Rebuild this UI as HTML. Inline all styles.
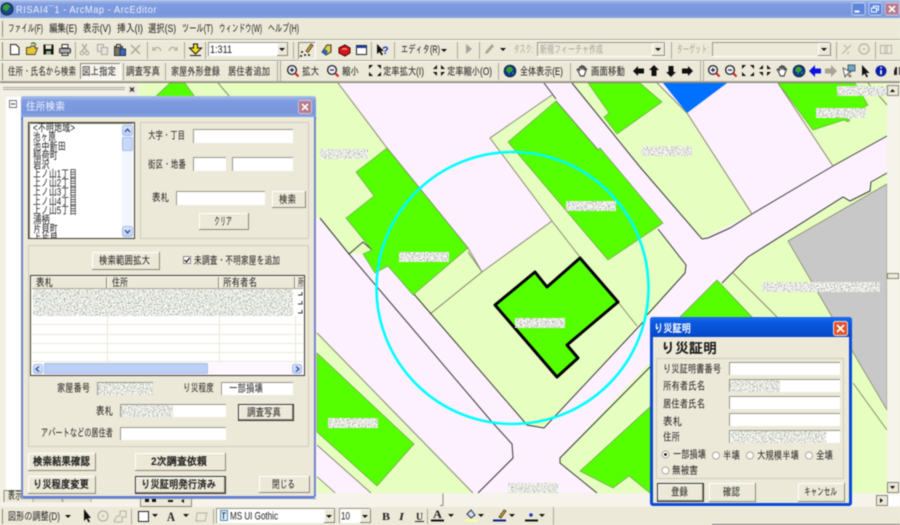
<!DOCTYPE html>
<html lang="ja"><head><meta charset="utf-8"><title>RISAI - ArcMap - ArcEditor</title>
<style>
html,body{margin:0;padding:0;background:#ece9d8;width:900px;height:525px;overflow:hidden}
svg{display:block;filter:blur(.45px)}
text{font-family:"Liberation Sans","IPAGothic","Noto Sans CJK JP",sans-serif;font-size:11px;fill:#1c1c1c}
.g{fill:#a6a498}
.b{font-weight:bold;fill:#222}
.hi{fill:none;stroke:#fff;stroke-width:1}
.lo{fill:none;stroke:#8a8878;stroke-width:1}
.dk{fill:none;stroke:#333;stroke-width:1}
.sep{stroke:#aca899;stroke-width:1}
.sepl{stroke:#fff;stroke-width:1}
.ln{fill:none;stroke:#8a8a70;stroke-width:1}
.rd{fill:none;stroke:#3a3a3a;stroke-width:1}
.lw{fill:#e6ffc0}
.gr{fill:#55ff00;stroke:#7a8a60;stroke-width:.6}
.inp{fill:#fff}
.ins{fill:none;stroke:#9a988c;stroke-width:1}
.tri{fill:#111}
</style></head><body>
<svg width="900" height="525" viewBox="0 0 900 525" xmlns="http://www.w3.org/2000/svg">
<defs>
<linearGradient id="tb" x1="0" y1="0" x2="0" y2="1"><stop offset="0" stop-color="#a9bfec"/><stop offset=".25" stop-color="#7f9be0"/><stop offset=".8" stop-color="#7896dc"/><stop offset="1" stop-color="#8aa4e2"/></linearGradient>
<linearGradient id="ab" x1="0" y1="0" x2="0" y2="1"><stop offset="0" stop-color="#1a6cf0"/><stop offset=".3" stop-color="#0a58e0"/><stop offset="1" stop-color="#0648c8"/></linearGradient>
<linearGradient id="sb" x1="0" y1="0" x2="0" y2="1"><stop offset="0" stop-color="#dbe6fb"/><stop offset="1" stop-color="#b9cdf6"/></linearGradient>
<filter id="noise" x="0" y="0" width="1" height="1" color-interpolation-filters="sRGB"><feTurbulence type="fractalNoise" baseFrequency=".7" numOctaves="2" seed="4"/><feGaussianBlur stdDeviation=".35"/><feColorMatrix values="1 0 0 0 .4 1 0 0 0 .41 1 0 0 0 .38 0 0 0 0 1"/><feComposite in2="SourceAlpha" operator="in"/></filter>
<g id="fxi"><path class="tri" d="M0 0h4l-4 4zM12 0v4l-4-4zM0 11v-4l4 4zM12 11h-4l4-4z" transform="translate(0,0)"/></g>
<g id="fxo"><path class="tri" d="M4 0v4h-4zM8 0l4 4h-4zM0 7h4v4zM8 7h4l-4 4z"/></g>
<g id="zi"><circle cx="5" cy="5" r="4.4" fill="#eef" stroke="#222" stroke-width="1.3"/><path d="M3 5h4M5 3v4" stroke="#222" stroke-width="1.2"/><path d="M8 8l3.5 3.5" stroke="#d02020" stroke-width="2"/></g>
<g id="zo"><circle cx="5" cy="5" r="4.4" fill="#eef" stroke="#222" stroke-width="1.3"/><path d="M3 5h4" stroke="#222" stroke-width="1.2"/><path d="M8 8l3.5 3.5" stroke="#d02020" stroke-width="2"/></g>
<g id="glb"><circle cx="6" cy="6" r="5.8" fill="#0a3a9a" stroke="#123"/><path d="M3 2.500l3-1 3 2-1 3-2 .5-1 3-1-3-2-1zM8 7l2 .5-1 2.500z" fill="#3aa030"/></g>
<g id="hnd"><path d="M2.500 7L1 4.500l1-.8 1.500 1.800V2l1.200-.3.500 3 .2-4 1.300 0 .2 4 .8-3.200 1.200.3-.6 3.700 1.300-2 1 .5-1.500 4-1 3H4.500z" fill="#fff" stroke="#222" stroke-width=".9"/></g>
<path id="dn" class="tri" d="M0 0h6l-3 3z"/>
</defs>

<!-- app background -->
<rect width="900" height="525" fill="#ece9d8"/>

<!-- map -->
<rect x="139" y="83" width="748" height="410" fill="#fdf0ff"/>
<path class="lw" d="M139 83H338L387 148 468 248 482 272 430 314 413 295 388 266 375 273 363 254 349 254 320 218H139z"/>
<path class="ln" d="M338 83L387 148 468 248 482 272M218 83L230 97"/>
<path class="rd" d="M320 218L349 254 363 242 372 250"/>
<path class="gr" d="M155 97L170 83H185L195 97z"/>
<path class="lw" d="M490 138L552 95 658 229 686 265 685 273 645 320 544 428 527 425 430 314 482 272 552 221z"/>
<path class="ln" d="M482 272L552 221 490 138 552 95M430 314L482 272M552 221L600 283"/>
<path class="lw" d="M413 295L468 252 482 272 430 314z"/>
<path class="ln" d="M430 314L482 272M468 252L482 272"/>
<path class="rd" d="M413 293L527 425 544 428 645 320M658 229L686 265 685 273 647 315"/>
<path class="rd" d="M349 254L492 422 512 444 513 458 478 493"/>
<path class="rd" d="M544 83L556 99M556 101L598 150"/>
<path class="ln" d="M618 302L637 326"/>
<path class="lw" d="M572 83H657L687 113 752 214 702 239 640 167z"/>
<path class="lw" d="M752 214L833 166 778 83H887V136L833 166z"/>
<path class="rd" d="M572 83L640 167 702 239 708 238 730 228 752 214 833 166 887 136"/>
<path d="M663 83H727L687 113z" fill="#0070ff"/>
<path class="ln" d="M657 83L687 113 752 214M778 83L833 166M868 83L887 105"/>
<path class="gr" d="M588 83L609 113 604 117 617 134 662 102 640 83z"/>
<path class="gr" d="M778 83H855L868 105 845 118 850 120 848 122 844 120 813 130z"/>
<path class="gr" d="M387 148L468 248 413 295 388 266 375 273 363 254 372 250 346 218 374 196 356 172z"/>
<path class="gr" d="M508 142L556 101 598 150 600 148 663 223 608 260z"/>
<path class="lw" d="M317 333L473 493H371L317 445z"/>
<path class="ln" d="M317 333L473 493M317 445L371 493"/>
<path class="gr" d="M317 353L414 444 377 486 317 432z"/>
<path class="rd" d="M317 477L335 493"/>
<path class="lw" d="M317 477L335 493H317z"/>
<path class="lw" d="M560 458L650 362 680 317 722 283 748 257 843 197 850 201 870 191 871 182 887 173V493H597L560 463z"/>
<path class="rd" d="M597 493L560 463 560 458 650 367 680 335M722 283L748 257 843 197 850 201 870 191 871 182 887 173"/>
<path d="M788 241L887 184V410L828 310z" fill="#c8c8c8" stroke="#8a8a70" stroke-width=".8"/>
<path class="ln" d="M733 273L780 320M853 383L887 430"/>
<path class="gr" d="M717 280L679 318 753 318z"/>
<path class="gr" d="M650 407L580 471 613 488 629 476 650 493H660V400z"/>
<path d="M495 305L535 272 547 287 580 258 618 302 567 345 578 358 557 377z" fill="#55ff00" stroke="#000" stroke-width="3" stroke-linejoin="round"/>
<circle cx="512.500" cy="288" r="136" fill="none" stroke="#00ffff" stroke-width="2.600"/>
<g fill="#000" filter="url(#noise)"><rect x="320" y="149" width="48" height="10"/><rect x="566" y="201" width="50" height="10"/><rect x="399" y="252" width="50" height="10"/><rect x="642" y="146" width="50" height="10"/><rect x="837" y="86" width="50" height="10"/><rect x="816" y="108" width="50" height="10"/><rect x="762" y="282" width="118" height="10"/><rect x="515" y="318" width="50" height="10"/><rect x="328" y="418" width="50" height="10"/><rect x="508" y="483" width="50" height="10"/></g>

<!-- right scrollbar -->
<rect x="887" y="83" width="13" height="422" fill="#f5f3ea"/>
<rect x="887.500" y="85.500" width="11" height="10" fill="#ece9d8" stroke="#8a8878"/><path class="tri" d="M890 92h5l-2.500-3z"/>
<rect x="887.500" y="273.500" width="11" height="5" fill="#ece9d8" stroke="#8a8878"/>
<rect x="887.500" y="482.500" width="11" height="10" fill="#ece9d8" stroke="#8a8878"/><path class="tri" d="M890 486h5l-2.500 3z"/>
<!-- bottom scrollbar -->
<rect x="0" y="493" width="900" height="14" fill="#f5f3ea"/>
<path class="lo" d="M443 493.500V505.500H440"/>
<rect x="876.500" y="495.500" width="11" height="10" fill="#ece9d8" stroke="#8a8878"/><path class="tri" d="M880 498v5l3-2.500z"/>
<rect x="888" y="495" width="12" height="11" fill="#fff"/>
<rect x="140.500" y="497.500" width="51" height="9" fill="#ece9d8" stroke="#8a8878"/><path class="tri" d="M145 499h4v3h-4zM152 499h4v3h-4zM168 500h5v2h-5zM184 499l-3 2 3 2z"/>

<!-- left TOC panel -->
<rect x="0" y="83" width="139" height="420" fill="#f3f1e6"/>
<rect x="6" y="97" width="132" height="393" fill="#fff"/>
<path d="M3 87.500H125M3 89.500H125" stroke="#aca899"/>
<rect x="128" y="85" width="9" height="9" fill="#ece9d8"/><path d="M130 87.500l4 4M134 87.500l-4 4" stroke="#111" stroke-width="1.200"/>
<rect x="9.500" y="100.500" width="7" height="7" fill="#fff" stroke="#777"/><path d="M11 104h4" stroke="#333"/>
<path d="M4 502V490.500H33V502" fill="#ece9d8" stroke="#8a8878"/>
<text x="8" y="499" textLength="14" lengthAdjust="spacingAndGlyphs">表示</text>
<path d="M33 502V493H62V502M63 502V493H91V502" fill="#e4e1d0" stroke="#aca899"/>

<!-- title bar -->
<rect width="900" height="18" fill="url(#tb)"/>
<circle cx="7" cy="9" r="6" fill="#174a8c" stroke="#123"/><path d="M3 6l4-2 3 2-2 4-2 1-3-2z" fill="#3aa030"/>
<text x="16" y="13" textLength="141" lengthAdjust="spacingAndGlyphs" style="fill:#eef2fd;font-size:10.500px;letter-spacing:.6px">RISAI4¯1 - ArcMap - ArcEditor</text>
<rect x="852" y="3" width="13" height="12" rx="2" fill="#5d85dc" stroke="#dce6fa" stroke-width=".7"/><rect x="854.500" y="10.500" width="5" height="2" fill="#fff"/>
<rect x="869" y="3" width="13" height="12" rx="2" fill="#5d85dc" stroke="#dce6fa" stroke-width=".7"/><rect x="873.500" y="6" width="5" height="4" fill="none" stroke="#fff"/><rect x="871.500" y="8" width="5" height="4" fill="#5d85dc" stroke="#fff"/>
<rect x="885" y="3" width="14" height="12" rx="2" fill="#b67a8c" stroke="#e6dce6" stroke-width=".7"/><path d="M889 6l6 6M895 6l-6 6" stroke="#fff" stroke-width="1.600"/>

<!-- menu -->
<rect y="18" width="900" height="21" fill="#ece9d8"/>
<path d="M0 39.500H900" class="sep"/><path d="M0 40.500H900" class="sepl"/>
<path d="M2.500 21V37" class="lo"/>
<text x="8" y="32" textLength="35" lengthAdjust="spacingAndGlyphs">ファイル(F)</text>
<text x="49" y="32" textLength="28" lengthAdjust="spacingAndGlyphs">編集(E)</text>
<text x="83" y="32" textLength="28" lengthAdjust="spacingAndGlyphs">表示(V)</text>
<text x="117" y="32" textLength="26" lengthAdjust="spacingAndGlyphs">挿入(I)</text>
<text x="148" y="32" textLength="28" lengthAdjust="spacingAndGlyphs">選択(S)</text>
<text x="182" y="32" textLength="31" lengthAdjust="spacingAndGlyphs">ツール(T)</text>
<text x="219" y="32" textLength="43" lengthAdjust="spacingAndGlyphs">ウィンドウ(W)</text>
<text x="268" y="32" textLength="31" lengthAdjust="spacingAndGlyphs">ヘルプ(H)</text>

<!-- toolbar 2 -->
<rect y="41" width="900" height="19" fill="#ece9d8"/>
<path d="M0 60.500H900" class="sep"/><path d="M0 61.500H900" class="sepl"/>
<path d="M2.500 42V59" class="lo"/>
<path d="M10.500 44.500H16L19 47.500V54.500H10.500z" fill="#fff" stroke="#222"/>
<path d="M26.500 54.500V47.500H30L31 46H35V48H37.500L35 54.500z" fill="#e8c830" stroke="#443"/><path d="M31 44c2-2 4-1 5 1" fill="none" stroke="#286a20" stroke-width="1.200"/>
<rect x="43.500" y="44.500" width="10" height="10" fill="#111"/><rect x="45.500" y="45" width="6" height="4" fill="#e8e8d0"/><rect x="46" y="51" width="5" height="3.500" fill="#8a8"/>
<path d="M62 44.500H68V48H62z" fill="#fff" stroke="#333"/><rect x="59.500" y="48.500" width="11" height="4.500" rx="1" fill="#aaa" stroke="#333"/><path d="M62 53H68V55.500H62z" fill="#ddd" stroke="#333"/>
<path d="M75.500 42V59M147.500 42V59M184.500 42V59M205.500 42V59M293.500 42V59M371.500 42V59M394.500 42V59M457.500 42V59M479.500 42V59M671.500 42V59M836.500 42V59M875.500 42V59" class="sep"/>
<path d="M82 44l5 7M87 44l-5 7" stroke="#a6a498" stroke-width="1.200"/><circle cx="82" cy="53" r="1.800" fill="none" stroke="#a6a498"/><circle cx="87" cy="53" r="1.800" fill="none" stroke="#a6a498"/>
<rect x="97.500" y="44.500" width="6" height="7" fill="#e6e4d8" stroke="#aaa"/><rect x="101.500" y="47.500" width="6" height="7" fill="#e6e4d8" stroke="#aaa"/>
<rect x="114.500" y="46.500" width="8" height="9" fill="#776" stroke="#333"/><rect x="116.500" y="44.500" width="4" height="3" fill="#ccc" stroke="#333"/><rect x="120" y="49" width="5.500" height="6.500" fill="#3a6ac8" stroke="#234"/>
<path d="M131 45l9 9M140 45l-9 9" stroke="#a6a498" stroke-width="1.400"/>
<path d="M153 50c3-4 7-3 8 1M153 47v3h3" fill="none" stroke="#b0ae9f" stroke-width="1.200"/>
<path d="M177 50c-3-4-7-3-8 1M177 47v3h-3" fill="none" stroke="#b0ae9f" stroke-width="1.200"/>
<path d="M193.500 44h4v4h4l-6 6-6-6h4z" fill="#f4e020" stroke="#111"/><path d="M190 55.500h11" stroke="#111"/>
<rect x="208" y="42" width="80" height="14" fill="#fff"/><path class="ins" d="M208.500 56V42.500H288"/>
<text x="210" y="53" textLength="22" lengthAdjust="spacingAndGlyphs">1:311</text>
<rect x="277" y="43" width="10" height="12" fill="#ece9d8"/><path class="lo" d="M287.500 43V55.500H277"/><path class="hi" d="M277.500 55V43.500H287"/><use href="#dn" x="279" y="48"/>
<path class="lo" d="M298.500 59V42.500H315"/><path class="hi" d="M315.500 42V59.500H298"/>
<path d="M311 44l2 1.500-5 7-2-1.500z" fill="#e8a020" stroke="#222" stroke-width=".7"/><path d="M301 52h2M304 55h2M300 56h2M308 55h2" stroke="#111" stroke-width="1.400"/>
<path d="M322 52l5-7h4v7l-5 3z" fill="#e0d040" stroke="#333"/><circle cx="325" cy="52" r="2.500" fill="#2a62b0"/>
<path d="M339 48l6-3 5 3v5l-5 3-6-3z" fill="#d81818" stroke="#400"/><path d="M342 49h5" stroke="#fbb"/>
<rect x="356.500" y="45.500" width="10" height="9" fill="#fff" stroke="#222"/><rect x="356.500" y="45.500" width="10" height="2.500" fill="#1a3aa0"/>
<path d="M377 44v10l2.500-2 2 3.500 1.500-1-2-3.500h3z" fill="#111"/><text x="382" y="54" class="b" style="font-size:11px;fill:#1a38c0">?</text>
<text x="401" y="53" textLength="39" lengthAdjust="spacingAndGlyphs">エディタ(R)</text><use href="#dn" x="441" y="49"/>
<path d="M466 44l6 5-6 5z" fill="#a6a498"/>
<path d="M485 54l1-3 6-7 2 2-6 7z" fill="#a6a498"/><use href="#dn" x="500" y="48"/>
<text x="514" y="53" textLength="19" class="g" lengthAdjust="spacingAndGlyphs">タスク:</text>
<rect x="537" y="42" width="128" height="14" fill="#ece9d8"/><path class="ins" d="M537.500 56V42.500H665"/><path d="M665.500 42V56.500H537" stroke="#fff" fill="none"/>
<text x="540" y="53" textLength="63" class="g" lengthAdjust="spacingAndGlyphs">新規フィーチャ作成</text>
<rect x="652" y="43" width="12" height="12" fill="#ece9d8"/><path class="lo" d="M664.500 43V55.500H652"/><path class="hi" d="M652.500 55V43.500H664"/><use href="#dn" x="655" y="48"/>
<text x="677" y="53" textLength="32" class="g" lengthAdjust="spacingAndGlyphs">ターゲット:</text>
<rect x="712" y="42" width="118" height="14" fill="#ece9d8"/><path class="ins" d="M712.500 56V42.500H830"/><path d="M830.500 42V56.500H712" stroke="#fff" fill="none"/>
<rect x="818" y="43" width="12" height="12" fill="#ece9d8"/><path class="lo" d="M830.500 43V55.500H818"/><path class="hi" d="M818.500 55V43.500H830"/><use href="#dn" x="821" y="48"/>
<path d="M842 54l9-9M844 45l3 3M847 54l2-2" stroke="#b5b3a4" stroke-width="1.100" fill="none"/>
<circle cx="864" cy="49" r="5" fill="none" stroke="#b5b3a4" stroke-width="1.200"/><circle cx="864" cy="49" r="1" fill="#b5b3a4"/>
<rect x="880.500" y="45.500" width="11" height="8" fill="none" stroke="#b5b3a4"/><path d="M885 46v7M887 46v7" stroke="#b5b3a4"/>

<!-- toolbar 3 -->
<rect y="62" width="900" height="19" fill="#ece9d8"/>
<path d="M0 81.500H900" stroke="#aca899"/><path d="M0 82.500H900" stroke="#8a8878"/>
<path d="M2.500 63V80" class="lo"/>
<text x="8" y="75" textLength="68" lengthAdjust="spacingAndGlyphs">住所・氏名から検索</text>
<rect x="80" y="63" width="40" height="16" fill="#f6f4ec"/><path class="lo" d="M80.500 79V63.500H120"/><path class="hi" d="M120.500 63V79.500H80"/>
<text x="82" y="75" textLength="34" lengthAdjust="spacingAndGlyphs">図上指定</text>
<path d="M123.500 63V80M165.500 63V80M277.500 61V81M280.500 61V81M498.500 63V80M570.500 63V80M700.500 61V81M703.500 61V81" class="sep"/>
<text x="126" y="75" textLength="34" lengthAdjust="spacingAndGlyphs">調査写真</text>
<text x="171" y="75" textLength="49" lengthAdjust="spacingAndGlyphs">家屋外形登録</text>
<text x="228" y="75" textLength="42" lengthAdjust="spacingAndGlyphs">居住者追加</text>
<use href="#zi" x="287" y="65"/><text x="302" y="75" textLength="17" lengthAdjust="spacingAndGlyphs">拡大</text>
<use href="#zo" x="327" y="65"/><text x="342" y="75" textLength="17" lengthAdjust="spacingAndGlyphs">縮小</text>
<use href="#fxi" x="369" y="65"/><text x="383" y="75" textLength="41" lengthAdjust="spacingAndGlyphs">定率拡大(I)</text>
<use href="#fxo" x="433" y="65"/><text x="447" y="75" textLength="45" lengthAdjust="spacingAndGlyphs">定率縮小(O)</text>
<use href="#glb" x="504" y="65"/><text x="520" y="75" textLength="43" lengthAdjust="spacingAndGlyphs">全体表示(E)</text>
<use href="#hnd" x="576" y="65"/><text x="591" y="75" textLength="34" lengthAdjust="spacingAndGlyphs">画面移動</text>
<path class="tri" d="M633 71l5-5v2.500h6v5h-6V76zM654 65l5 5h-2.500v6h-5v-6H649zM671 77l-5-5h2.500v-6h5v6H676zM693 71l-5 5v-2.500h-6v-5h6V66z"/>
<use href="#zi" x="708" y="65"/><use href="#zo" x="725" y="65"/><use href="#fxi" x="742" y="65"/><use href="#fxo" x="759" y="65"/><use href="#hnd" x="776" y="65"/><use href="#glb" x="793" y="65"/>
<path d="M809 71l6-6v3.500h6v5h-6V77z" fill="#0a14e0"/><path d="M837 71l-6 6v-3.500h-6v-5h6V65z" fill="#a6a498"/>
<path d="M843 68l2 9 2-3 3 3 1-1-3-3 3-1z" fill="#fff" stroke="#333" stroke-width=".7"/><rect x="848" y="65" width="7" height="6" fill="#6ac" stroke="#333" stroke-width=".7"/>
<path d="M862 65v11l2.500-2.500 2 4 1.500-1-2-3.500h3.500z" fill="#111"/>
<circle cx="881" cy="71" r="5.500" fill="#0a1ea8"/><path d="M881 67v1.500M881 70v4.500" stroke="#fff" stroke-width="1.700"/>
<path d="M894 75v-4l1.500-4h1.500v8zM899 75v-8h1v8z" fill="#222"/>

<!-- Main dialog -->
<rect x="21" y="96" width="295" height="402" rx="3" fill="#5a7de0"/>
<path d="M21.500 120V494.500M315.500 120V494.500M21 498.500H316" stroke="#8c92a8"/>
<path d="M21 117V99q0-3 3-3H313q3 0 3 3V117z" fill="url(#tb)"/>
<text x="26" y="110" textLength="39" lengthAdjust="spacingAndGlyphs" style="fill:#f0f4fc;font-size:11px">住所検索</text>
<rect x="298.500" y="100.500" width="13" height="13" rx="2" fill="#b67a8c" stroke="#e6dce6" stroke-width=".7"/><path d="M302 104l6 6M308 104l-6 6" stroke="#fff" stroke-width="1.600"/>
<rect x="23" y="117" width="291" height="379" fill="#ece9d8"/>

<!-- listbox -->
<rect x="28.500" y="122.500" width="106" height="116" fill="#fff" stroke="#3a3a30"/>
<path d="M30 123.500H133M29.500 124V238" stroke="#8a8878"/>
<g><text x="33" y="131.500" textLength="42" lengthAdjust="spacingAndGlyphs">&lt;不明地域&gt;</text>
<text x="33" y="140.500" textLength="23" lengthAdjust="spacingAndGlyphs">池ヶ原</text>
<text x="33" y="150" textLength="33" lengthAdjust="spacingAndGlyphs">池中新田</text>
<text x="33" y="159" textLength="25" lengthAdjust="spacingAndGlyphs">稲荷町</text>
<text x="33" y="168.500" textLength="17" lengthAdjust="spacingAndGlyphs">岩沢</text>
<text x="33" y="177.500" textLength="44" lengthAdjust="spacingAndGlyphs">上ノ山1丁目</text>
<text x="33" y="186.500" textLength="44" lengthAdjust="spacingAndGlyphs">上ノ山2丁目</text>
<text x="33" y="195.500" textLength="44" lengthAdjust="spacingAndGlyphs">上ノ山3丁目</text>
<text x="33" y="205" textLength="44" lengthAdjust="spacingAndGlyphs">上ノ山4丁目</text>
<text x="33" y="214" textLength="44" lengthAdjust="spacingAndGlyphs">上ノ山5丁目</text>
<text x="33" y="223" textLength="17" lengthAdjust="spacingAndGlyphs">浦柄</text>
<text x="33" y="232.500" textLength="25" lengthAdjust="spacingAndGlyphs">片貝町</text></g>
<text x="33" y="241.500" textLength="25" lengthAdjust="spacingAndGlyphs">上片貝</text>
<rect x="28" y="238.300" width="107" height="6" fill="#ece9d8"/><path d="M28 238.500H135" stroke="#3a3a30"/>
<rect x="122" y="124" width="11" height="114" fill="#f2f6fc"/>
<rect x="122.500" y="125.500" width="10" height="10" rx="2" fill="url(#sb)" stroke="#a8bce8"/><path d="M125 132l2.500-3 2.500 3" fill="none" stroke="#2a4a90" stroke-width="1.300"/>
<rect x="122.500" y="137.500" width="10" height="13" rx="1" fill="#c8d8f8" stroke="#a8bce8"/>
<rect x="122.500" y="226.500" width="10" height="10" rx="2" fill="url(#sb)" stroke="#a8bce8"/><path d="M125 230l2.500 3 2.500-3" fill="none" stroke="#2a4a90" stroke-width="1.300"/>

<!-- right group -->
<rect x="140.500" y="122.500" width="168" height="116" fill="none" stroke="#cfccba"/>
<text x="148" y="139" textLength="37" lengthAdjust="spacingAndGlyphs">大字・丁目</text>
<rect class="inp" x="193" y="129" width="100" height="14"/><path class="ins" d="M193.500 143V129.500H293"/>
<text x="148" y="168" textLength="38" lengthAdjust="spacingAndGlyphs">街区・地番</text>
<rect class="inp" x="193" y="157" width="33" height="14"/><path class="ins" d="M193.500 171V157.500H226"/>
<rect class="inp" x="232" y="157" width="61" height="14"/><path class="ins" d="M232.500 171V157.500H293"/>
<text x="152" y="201" textLength="17" lengthAdjust="spacingAndGlyphs">表札</text>
<rect class="inp" x="176" y="191" width="89" height="14"/><path class="ins" d="M176.500 205V191.500H265"/>
<path class="hi" d="M272.500 207V191.500H305"/><path class="lo" d="M305.500 191V207.500H272"/>
<text x="279" y="203" textLength="17" lengthAdjust="spacingAndGlyphs">検索</text>
<path class="hi" d="M199.500 229V213.500H248"/><path class="lo" d="M248.500 213V229.500H199"/>
<text x="214" y="225" textLength="18" lengthAdjust="spacingAndGlyphs">クリア</text>

<!-- group 2 -->
<rect x="28.500" y="245.500" width="280" height="201" fill="none" stroke="#cfccba"/>
<path class="hi" d="M92.500 269V252.500H159"/><path class="lo" d="M159.500 252V269.500H92"/>
<text x="99" y="264" textLength="51" lengthAdjust="spacingAndGlyphs">検索範囲拡大</text>
<rect x="183.500" y="256.500" width="7" height="7" fill="#fff" stroke="#888"/><path d="M184.500 260l2 2 3-4" fill="none" stroke="#111" stroke-width="1.200"/>
<text x="194" y="264" textLength="86" lengthAdjust="spacingAndGlyphs">未調査・不明家屋を追加</text>

<!-- list view -->
<rect x="30.500" y="275.500" width="274" height="100" fill="#fff" stroke="#3a3a30"/>
<rect x="32" y="277" width="271" height="11" fill="#ece9d8"/>
<path d="M32 288.500H303" stroke="#aca899"/>
<path d="M106.500 277V288M218.500 277V288M294.500 277V288" stroke="#8a8878"/><path d="M107.500 277V288M219.500 277V288M295.500 277V288" stroke="#fff"/>
<text x="36" y="286" textLength="17" lengthAdjust="spacingAndGlyphs">表札</text>
<text x="112" y="286" textLength="16" lengthAdjust="spacingAndGlyphs">住所</text>
<text x="223" y="286" textLength="34" lengthAdjust="spacingAndGlyphs">所有者名</text>
<text x="298" y="286" textLength="6" lengthAdjust="spacingAndGlyphs">所</text>
<path d="M32 324.500H303M32 334.500H303M32 343.500H303M32 352.500H303M32 361.500H303M107.500 316V363M219.500 316V363M295.500 316V363" stroke="#ece9d8"/>
<rect x="33" y="289" width="260" height="27" fill="#000" filter="url(#noise)"/>
<path d="M298 295h4v-3M298 304h4v-3M298 313h4v-3" fill="none" stroke="#333"/>
<rect x="32" y="363" width="271" height="12" fill="#fdf8ff"/>
<rect x="33.500" y="364.500" width="9" height="9" rx="2" fill="url(#sb)" stroke="#a8bce8"/><path d="M39 366.500l-3 2.500 3 2.500" fill="none" stroke="#2a4a90" stroke-width="1.200"/>
<rect x="44.500" y="363.500" width="163" height="10" rx="1" fill="#bcd0f6" stroke="#a8bce8"/>
<rect x="292.500" y="364.500" width="9" height="9" rx="2" fill="url(#sb)" stroke="#a8bce8"/><path d="M296 366.500l3 2.500-3 2.500" fill="none" stroke="#2a4a90" stroke-width="1.200"/>

<!-- detail fields -->
<text x="57" y="391.500" textLength="33" lengthAdjust="spacingAndGlyphs">家屋番号</text>
<rect x="97" y="382" width="56" height="13" fill="#000" filter="url(#noise)"/><path class="ins" d="M97.500 395V382.500H153"/>
<text x="183" y="391.500" textLength="31" lengthAdjust="spacingAndGlyphs">り災程度</text>
<rect class="inp" x="221" y="382" width="72" height="13"/><path class="ins" d="M221.500 395V382.500H293"/>
<text x="229" y="392" textLength="34" lengthAdjust="spacingAndGlyphs">一部損壊</text>
<text x="96" y="414.500" textLength="17" lengthAdjust="spacingAndGlyphs">表札</text>
<rect class="inp" x="120" y="404" width="106" height="13"/><rect x="121" y="405" width="52" height="12" fill="#000" filter="url(#noise)"/><path class="ins" d="M120.500 417V404.500H226"/>
<rect x="238.500" y="404.500" width="55" height="16" fill="#ece9d8" stroke="#333"/><path class="hi" d="M239.500 420V405.500H293"/><path class="lo" d="M292.500 405V419.500H239"/>
<text x="247" y="416" textLength="34" lengthAdjust="spacingAndGlyphs">調査写真</text>
<text x="41" y="436.500" textLength="72" lengthAdjust="spacingAndGlyphs">アパートなどの居住者</text>
<rect class="inp" x="120" y="427" width="106" height="13"/><path class="ins" d="M120.500 440V427.500H226"/>

<!-- bottom buttons -->
<path class="hi" d="M28.500 470V453.500H95"/><path class="lo" d="M95.500 453V470.500H28"/>
<text x="33" y="465" class="b" textLength="57" lengthAdjust="spacingAndGlyphs">検索結果確認</text>
<path class="hi" d="M135.500 470V453.500H225"/><path class="lo" d="M225.500 453V470.500H135"/>
<text x="151" y="465" class="b" textLength="56" lengthAdjust="spacingAndGlyphs">2次調査依頼</text>
<path class="hi" d="M28.500 493V476.500H95"/><path class="lo" d="M95.500 476V493.500H28"/>
<text x="33" y="488" class="b" textLength="56" lengthAdjust="spacingAndGlyphs">り災程度変更</text>
<rect x="135.500" y="476.500" width="90" height="17" fill="#ece9d8" stroke="#333"/><path class="hi" d="M136.500 492V477.500H225"/><path class="lo" d="M224.500 477V492.500H136"/>
<text x="141" y="488" class="b" textLength="75" lengthAdjust="spacingAndGlyphs">り災証明発行済み</text>
<path class="hi" d="M259.500 492V476.500H309"/><path class="lo" d="M309.500 476V492.500H259"/>
<text x="272" y="488" textLength="23" lengthAdjust="spacingAndGlyphs">閉じる</text>

<!-- Small dialog -->
<rect x="650" y="317" width="202" height="189" rx="3" fill="#0a4ad8"/>
<path d="M650 337V320q0-3 3-3H849q3 0 3 3V337z" fill="url(#ab)"/>
<text x="654" y="332" class="b" textLength="37" lengthAdjust="spacingAndGlyphs" style="fill:#fff">り災証明</text>
<rect x="833.500" y="321.500" width="14" height="14" rx="2" fill="#e0562c" stroke="#f4e0d8"/><path d="M837 325l7 7M844 325l-7 7" stroke="#fff" stroke-width="1.800"/>
<rect x="653" y="337" width="196" height="166" fill="#ece9d8"/>
<text x="661" y="353" class="b" textLength="56" lengthAdjust="spacingAndGlyphs" style="font-size:14px;fill:#111">り災証明</text>
<rect x="656.500" y="358.500" width="187" height="120" fill="none" stroke="#cfccba"/>
<text x="663" y="372.500" textLength="58" lengthAdjust="spacingAndGlyphs">り災証明書番号</text>
<rect class="inp" x="729" y="362" width="111" height="13"/><path class="ins" d="M729.500 375V362.500H840"/>
<text x="663" y="389.500" textLength="42" lengthAdjust="spacingAndGlyphs">所有者氏名</text>
<rect class="inp" x="729" y="379" width="111" height="13"/><rect x="730" y="380" width="50" height="12" fill="#000" filter="url(#noise)"/><path class="ins" d="M729.500 392V379.500H840"/>
<text x="663" y="407.500" textLength="42" lengthAdjust="spacingAndGlyphs">居住者氏名</text>
<rect class="inp" x="729" y="396" width="111" height="13"/><path class="ins" d="M729.500 409V396.500H840"/>
<text x="663" y="425" textLength="19" lengthAdjust="spacingAndGlyphs">表札</text>
<rect class="inp" x="729" y="413" width="111" height="13"/><path class="ins" d="M729.500 426V413.500H840"/>
<text x="663" y="440.500" textLength="17" lengthAdjust="spacingAndGlyphs">住所</text>
<rect class="inp" x="729" y="430" width="111" height="13"/><rect x="731" y="431" width="95" height="12" fill="#000" filter="url(#noise)"/><path class="ins" d="M729.500 443V430.500H840"/>
<circle cx="665.500" cy="454.500" r="3.500" fill="#fff" stroke="#aca899"/><circle cx="665.500" cy="454.500" r="1.400" fill="#111"/>
<text x="673" y="458" textLength="33" lengthAdjust="spacingAndGlyphs">一部損壊</text>
<circle cx="716" cy="455.500" r="3.500" fill="#fff" stroke="#aca899"/>
<text x="723" y="459" textLength="17" lengthAdjust="spacingAndGlyphs">半壊</text>
<circle cx="750" cy="455.500" r="3.500" fill="#fff" stroke="#aca899"/>
<text x="757" y="459" textLength="42" lengthAdjust="spacingAndGlyphs">大規模半壊</text>
<circle cx="809" cy="455.500" r="3.500" fill="#fff" stroke="#aca899"/>
<text x="816" y="459" textLength="17" lengthAdjust="spacingAndGlyphs">全壊</text>
<circle cx="665.500" cy="470.500" r="3.500" fill="#fff" stroke="#aca899"/>
<text x="672" y="474" textLength="26" lengthAdjust="spacingAndGlyphs">無被害</text>
<rect x="657.500" y="483.500" width="46" height="18" fill="#ece9d8" stroke="#333"/><path class="hi" d="M658.500 500V484.500H703"/><path class="lo" d="M702.500 484V500.500H658"/>
<text x="671" y="495.500" textLength="17" lengthAdjust="spacingAndGlyphs">登録</text>
<path class="hi" d="M709.500 501V483.500H755"/><path class="lo" d="M755.500 483V501.500H709"/>
<text x="723" y="495.500" textLength="17" lengthAdjust="spacingAndGlyphs">確認</text>
<path class="hi" d="M798.500 501V483.500H844"/><path class="lo" d="M844.500 483V501.500H798"/>
<text x="804" y="495.500" textLength="33" lengthAdjust="spacingAndGlyphs">キャンセル</text>

<!-- bottom toolbar -->
<rect y="507" width="900" height="18" fill="#ece9d8"/>
<path d="M712 524.500H900" stroke="#777"/>
<path d="M2.500 509V524" class="lo"/>
<text x="8" y="520" textLength="52" lengthAdjust="spacingAndGlyphs">図形の調整(D)</text><use href="#dn" x="65" y="515"/>
<path d="M84 509v12l2.500-2.500 2 4 1.500-1-2-3.500h3z" fill="#111"/>
<circle cx="103" cy="516" r="5" fill="none" stroke="#b5b3a4" stroke-width="1.200"/><circle cx="103" cy="516" r="1" fill="#b5b3a4"/>
<path d="M114 521l3-5h3v-5h6v6h-4v5h-7z" fill="none" stroke="#b5b3a4"/>
<path d="M131.500 509V524M213.500 509V524M427.500 509V524M553.500 507V525" class="sep"/>
<rect x="138.500" y="511.500" width="10" height="10" fill="#fff" stroke="#222"/><use href="#dn" x="152" y="514"/>
<text x="167" y="521" class="b" textLength="8" lengthAdjust="spacingAndGlyphs" style="font-family:'Liberation Serif',serif;font-size:13px">A</text><use href="#dn" x="183" y="514"/>
<path d="M197 513h10l-2 8h-9z" fill="none" stroke="#b5b3a4"/>
<rect x="216" y="508" width="119" height="15" fill="#fff"/><path class="ins" d="M216.500 523V508.500H335"/>
<rect x="220.500" y="510.500" width="7" height="10" fill="#def" stroke="#58a"/><path d="M222 513h4M223.500 513v6" stroke="#245"/>
<text x="230" y="519.500" textLength="48" lengthAdjust="spacingAndGlyphs">MS UI Gothic</text>
<rect x="324" y="509" width="10" height="13" fill="#ece9d8"/><path class="lo" d="M334.500 509V522.500H324"/><path class="hi" d="M324.500 522V509.500H334"/><use href="#dn" x="326" y="515"/>
<rect x="339" y="508" width="31" height="15" fill="#fff"/><path class="ins" d="M339.500 523V508.500H370"/>
<text x="341" y="519.500" textLength="9" lengthAdjust="spacingAndGlyphs">10</text>
<rect x="360" y="509" width="10" height="13" fill="#ece9d8"/><path class="lo" d="M370.500 509V522.500H360"/><path class="hi" d="M360.500 522V509.500H370"/><use href="#dn" x="362" y="515"/>
<text x="382" y="520" class="b" textLength="8" lengthAdjust="spacingAndGlyphs" style="font-family:'Liberation Serif',serif;font-size:11px">B</text>
<text x="399" y="520" class="b" textLength="5" lengthAdjust="spacingAndGlyphs" style="font-family:'Liberation Serif',serif;font-size:11px;font-style:italic">I</text>
<text x="416" y="520" class="b" textLength="7" lengthAdjust="spacingAndGlyphs" style="font-family:'Liberation Serif',serif;font-size:11px">U</text><path d="M415 521.500h9" stroke="#222"/>
<text x="433" y="518" class="b" textLength="9" lengthAdjust="spacingAndGlyphs" style="font-family:'Liberation Serif',serif;font-size:12px">A</text><path d="M431 520.500h13" stroke="#111" stroke-width="2"/><use href="#dn" x="448" y="514"/>
<path d="M467 514l4-4 4 5-4 3z" fill="#dde" stroke="#135"/><path d="M465 520.500h13" stroke="#ffff90" stroke-width="2"/><use href="#dn" x="478" y="514"/>
<path d="M499 517l5-7 2 1-5 7z" fill="#e0b020" stroke="#222" stroke-width=".7"/><path d="M493 520.500h13" stroke="#102080" stroke-width="2"/><use href="#dn" x="509" y="514"/>
<circle cx="531" cy="515" r="1.800" fill="#1a3ac0"/><path d="M525 520.500h13" stroke="#111" stroke-width="2"/><use href="#dn" x="539" y="514"/>
</svg>
</body></html>
